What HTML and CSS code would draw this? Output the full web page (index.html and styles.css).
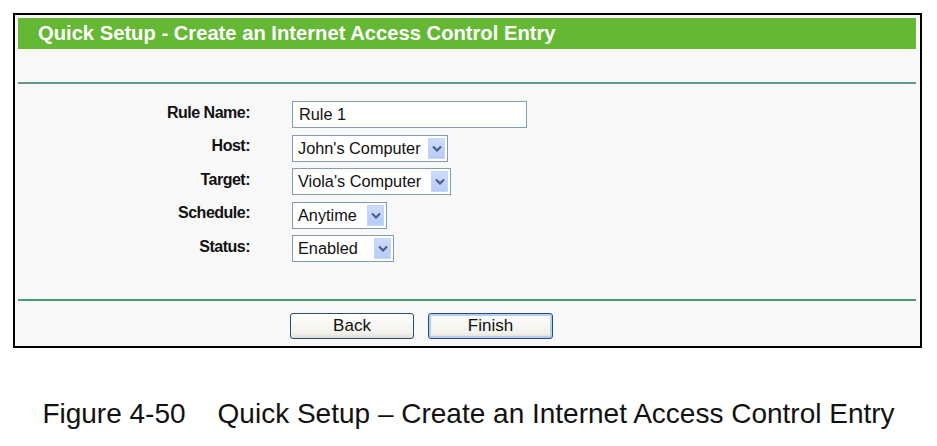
FILE: index.html
```html
<!DOCTYPE html>
<html lang="en">
<head>
    <meta charset="UTF-8">
    <title>Quick Setup - Create an Internet Access Control Entry</title>
    <link rel="stylesheet" href="styles.css">
</head>
<body>
    <div class="frame">
        <div class="title-bar">Quick Setup - Create an Internet Access Control Entry</div>
        <div class="rule rule-top"></div>

        <div class="form-grid">
            <label class="field-label">Rule Name:</label>
            <div class="text-input">Rule 1</div>

            <label class="field-label">Host:</label>
            <div class="select select-host">
                <span class="select-text">John's Computer</span>
                <span class="select-arrow">
                    <svg width="10" height="7" viewBox="0 0 10 7"><polyline points="1,1.5 5,5.5 9,1.5" fill="none" stroke="#4b5f86" stroke-width="2.2"/></svg>
                </span>
            </div>

            <label class="field-label">Target:</label>
            <div class="select select-target">
                <span class="select-text">Viola's Computer</span>
                <span class="select-arrow">
                    <svg width="10" height="7" viewBox="0 0 10 7"><polyline points="1,1.5 5,5.5 9,1.5" fill="none" stroke="#4b5f86" stroke-width="2.2"/></svg>
                </span>
            </div>

            <label class="field-label">Schedule:</label>
            <div class="select select-schedule">
                <span class="select-text">Anytime</span>
                <span class="select-arrow">
                    <svg width="10" height="7" viewBox="0 0 10 7"><polyline points="1,1.5 5,5.5 9,1.5" fill="none" stroke="#4b5f86" stroke-width="2.2"/></svg>
                </span>
            </div>

            <label class="field-label">Status:</label>
            <div class="select select-status">
                <span class="select-text">Enabled</span>
                <span class="select-arrow">
                    <svg width="10" height="7" viewBox="0 0 10 7"><polyline points="1,1.5 5,5.5 9,1.5" fill="none" stroke="#4b5f86" stroke-width="2.2"/></svg>
                </span>
            </div>
        </div>

        <div class="rule rule-bottom"></div>

        <div class="button-row">
            <button class="xp-button">Back</button>
            <button class="xp-button default">Finish</button>
        </div>
    </div>

    <p class="caption"><span>Figure 4-50</span><span>Quick Setup – Create an Internet Access Control Entry</span></p>
</body>
</html>
```

FILE: styles.css
```css
body {
    margin: 0;
    padding: 13px 0 0 13px;
    background-color: #fff;
    font-family: "Liberation Sans", Arial, sans-serif;
}
.frame {
    box-sizing: border-box;
    width: 909px;
    height: 335px;
    border: 2px solid #000;
    padding: 3px 4px 6px 3px;
    background-color: #f8f8f8;
}
.title-bar {
    height: 31px;
    display: flex;
    align-items: center;
    padding-left: 20px;
    background-color: #65b833;
    color: #fff;
    font-size: 20.2px;
    font-weight: bold;
}
.rule {
    height: 2px;
    background-color: #5d9c80;
}
.rule-top {
    margin-top: 33px;
}
.rule-bottom {
    margin-top: 37px;
    background-color: #4f9a6c;
}
.form-grid {
    display: grid;
    grid-template-columns: 232px auto;
    column-gap: 42px;
    row-gap: 6.5px;
    margin-top: 17px;
    justify-items: start;
    align-items: center;
}
.field-label {
    justify-self: end;
    font-size: 16px;
    letter-spacing: -0.5px;
    font-weight: bold;
    color: #111;
    margin-top: -4px;
}
.text-input, .select {
    box-sizing: border-box;
    height: 27px;
    border: 1px solid #7f9db9;
    background-color: #fff;
    font-size: 16.3px;
    color: #111;
}
.text-input {
    width: 235px;
    padding-left: 6px;
    line-height: 25px;
}
.select {
    display: flex;
    align-items: center;
    justify-content: space-between;
    padding: 2px 2px 2px 5px;
}
.select-host { width: 156px; }
.select-target { width: 159px; }
.select-schedule { width: 95px; }
.select-status { width: 102px; }
.select-arrow {
    box-sizing: border-box;
    width: 17px;
    height: 21px;
    display: flex;
    align-items: center;
    justify-content: center;
    background: linear-gradient(#cddbfc, #b7cbf7);
    border: 1px solid #c6d6fb;
}
.button-row {
    display: flex;
    gap: 14px;
    padding-left: 272px;
    margin-top: 12px;
}
.xp-button {
    box-sizing: border-box;
    width: 124px;
    height: 26px;
    border: 1px solid #274a78;
    border-radius: 3px;
    background: linear-gradient(#fefefe, #f1f0ea 80%, #dedcd2);
    font-family: "Liberation Sans", Arial, sans-serif;
    font-size: 17px;
    color: #111;
    padding: 0;
}
.xp-button.default {
    width: 125px;
    box-shadow: inset 0 0 0 2px #b5cdf5;
}
.caption {
    margin: 50px 0 0 -13px;
    display: flex;
    justify-content: center;
    gap: 32px;
    font-size: 28px;
    line-height: 32px;
    color: #111;
}
```
